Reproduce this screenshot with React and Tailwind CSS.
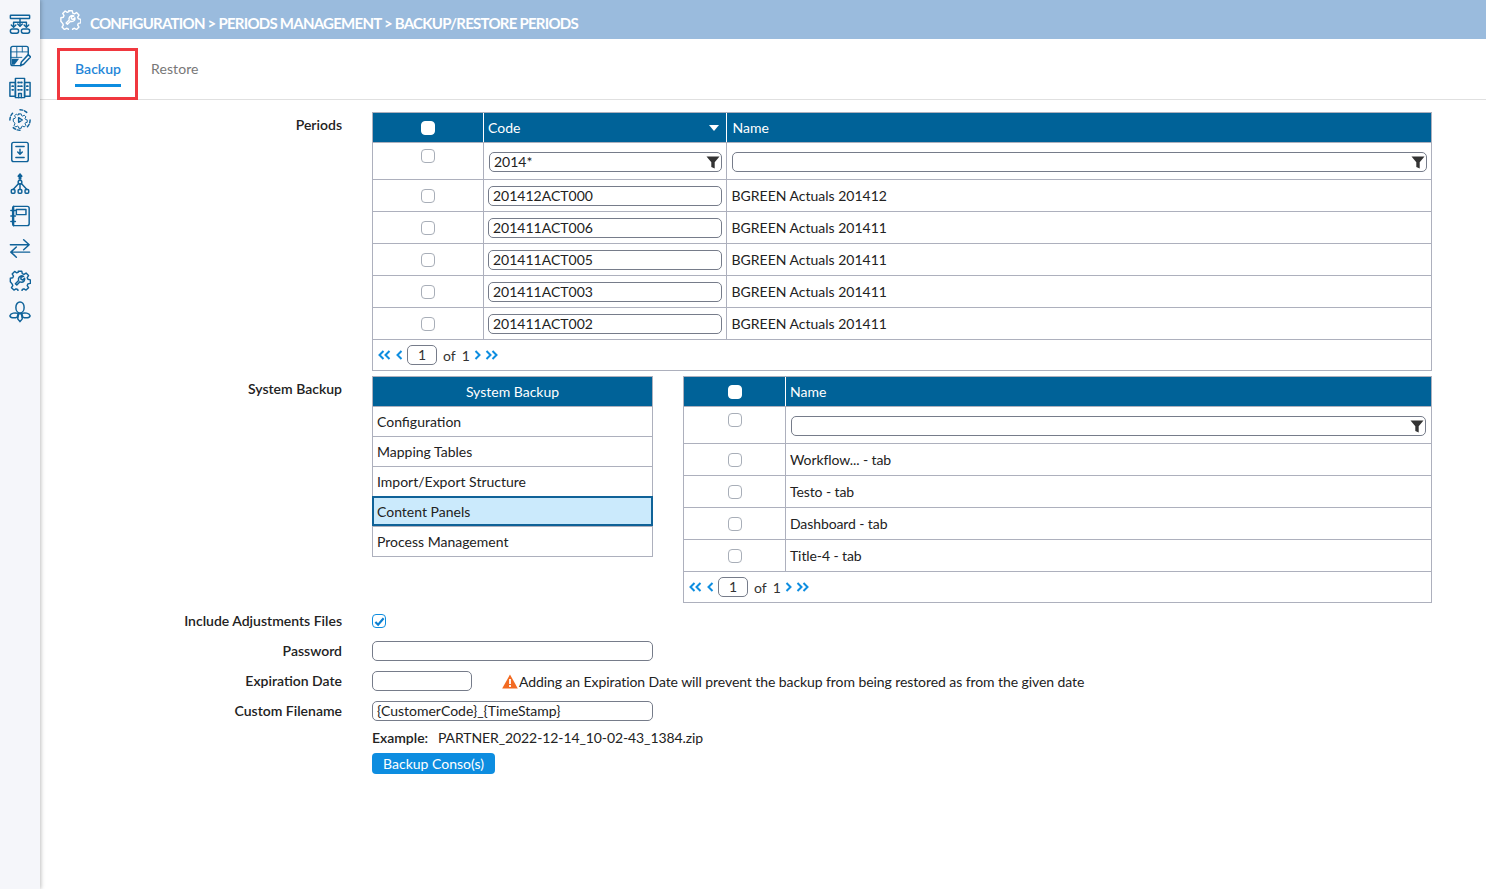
import React from "react";

const Ico = ({ children, className = "" }) => (
  <svg viewBox="0 0 24 24" fill="none" stroke="#0f6299" strokeWidth="1.6" strokeLinecap="round" strokeLinejoin="round" className={"w-[22px] h-[22px] " + className}>{children}</svg>
);
const gearPath = "M10 2h4l.6 2.8 1.9.8 2.4-1.5 2.8 2.8-1.5 2.4.8 1.9 2.8.6v4l-2.8.6-.8 1.9 1.5 2.4-2.8 2.8-2.4-1.5-1.9.8-.6 2.8h-4l-.6-2.8-1.9-.8-2.4 1.5-2.8-2.8 1.5-2.4-.8-1.9L1 14v-4l2.8-.6.8-1.9-1.5-2.4 2.8-2.8 2.4 1.5 1.9-.8z";

const sideIcons = [
  <Ico key="1"><rect x="1.500" y="2.500" width="21" height="3.500" rx=".5" /><path d="M12 6v8M5 10h14M5 10v5M19 10v5" /><path d="M2.500 13l2.500 2.500L7.500 13M16.500 13l2.500 2.500 2.500-2.500M9.500 12l2.500 2.500 2.500-2.500" /><rect x="1.500" y="17.500" width="9" height="4.500" rx="2" /><rect x="13.500" y="17.500" width="9" height="4.500" rx="2" /></Ico>,
  <Ico key="2"><path d="M13 22.500H4a2 2 0 0 1-2-2v-17a2 2 0 0 1 2-2h15a2 2 0 0 1 2 2v7" /><path d="M2 7.500h19M2 13.500h12M8.500 1.500v12M14.500 1.500v6" strokeWidth="1" /><path d="M12.500 22.500l1-4L21 10.500l2.500 2.500-7.500 8z" /><path d="M3 15l8 0-5 6.500-3 0z" fill="#0f6299" stroke="none" /></Ico>,
  <Ico key="3"><rect x="7" y="1.500" width="10" height="21" /><rect x="1" y="6" width="6" height="15" /><rect x="17" y="6" width="6" height="15" /><path d="M10 6h1M13 6h1M10 10h1M13 10h1M10 14h1M13 14h1M3.500 10h1M3.500 14h1M19.500 10h1M19.500 14h1" strokeWidth="2" /><path d="M10.500 22.500v-4.500h3v4.500" /></Ico>,
  <Ico key="4"><path d={gearPath} transform="translate(4 4) scale(.667)" /><path d="M10.500 9.500v5l4-2.500z" /><path d="M12 .8a11 11 0 0 1 8 3.500M23 12a11 11 0 0 1-3 7.500M12 23.200a11 11 0 0 1-8-3.500M1 12a11 11 0 0 1 3-7.500" strokeDasharray="3 2" /></Ico>,
  <Ico key="5"><rect x="3" y="1.500" width="18" height="21" rx="2" /><path d="M7.500 6h9M7.500 18h9M12 9v5M9.500 12l2.500 2.500 2.500-2.500" /></Ico>,
  <Ico key="6"><path d="M12 1l2 2.500h-1.200v3h-1.600v-3H10z" fill="#0f6299" /><circle cx="12" cy="10" r="2" /><path d="M12 12v6M10.500 11.500L4.500 18M13.500 11.500L19.500 18" /><rect x="2.500" y="18" width="4" height="4" rx="1" /><rect x="10" y="18" width="4" height="4" rx="1" /><rect x="17.500" y="18" width="4" height="4" rx="1" /></Ico>,
  <Ico key="7"><path d="M5 1.500h15a2 2 0 0 1 2 2v17a2 2 0 0 1-2 2H5z" /><path d="M2 6h5M2 12h5M2 18h5M5 1.500a2 2 0 0 0-1 2v17a2 2 0 0 0 1 2" /><rect x="8" y="5" width="10.500" height="5.500" /></Ico>,
  <Ico key="8"><path d="M1.500 8.500H22M16 3l6 5.500-6 5.500M22.500 16.500H2M8 11l-6 5.500 6 5.500" /></Ico>,
  <Ico key="9"><path d={gearPath} transform="scale(.96) translate(.500 .500)" /><path d="M16 8a4 4 0 0 0-5 1 4 4 0 0 0-.5 3.500L7 16l1.500 1.500 3.500-3.500a4 4 0 0 0 4.500-1 4 4 0 0 0 .5-3l-2 2-2-1v-2z" /></Ico>,
  <Ico key="10"><ellipse cx="12" cy="7" rx="4.500" ry="6" /><path d="M10 13.500c-3-1-8-.5-9 2.500 0 2.500 5 3 8 1.500l1-4zM14 13.500c3-1 8-.5 9 2.500 0 2.500-5 3-8 1.500l-1-4zM10.500 14h3l1 5.500-2.500 3-2.500-3z" /></Ico>,
];

const Check = ({ dark }) => (
  <span className={"block w-[14px] h-[14px] rounded-[4px] border " + (dark ? "bg-white border-white" : "bg-white border-[#a8aeb8]")} />
);

const Funnel = () => (
  <svg viewBox="0 0 14 14" className="w-[14px] h-[14px] absolute right-[1px] top-[2px]">
    <path d="M.5 1.500h13L8.700 7.200V13.500L5.300 12V7.200z" fill="#333" />
  </svg>
);

const Field = ({ children, className = "" }) => (
  <div className={"h-[20px] bg-white border border-[#767c8a] rounded-[5px] text-[14px] leading-[18px] text-[#222] px-1 relative " + className}>{children}</div>
);

const Chev = ({ d, w = 9 }) => (
  <svg viewBox={`0 0 ${w} 10`} width={w} height="10" fill="none" stroke="#0d8de0" strokeWidth="2"><path d={d} /></svg>
);
const SglL = () => <Chev w={7} d="M5.500 1L1.500 5l4 4" />;
const SglR = () => <Chev w={7} d="M1.500 1l4 4-4 4" />;
const DblL = () => <Chev w={13} d="M5.500 1L1.500 5l4 4M11.500 1l-4 4 4 4" />;
const DblR = () => <Chev w={13} d="M1.500 1l4 4-4 4M7.500 1l4 4-4 4" />;

const Pager = () => (
  <div className="h-[30px] flex items-center pl-[5px] text-[14px] text-[#333]">
    <span className="w-[17px] flex"><DblL /></span>
    <span className="w-[11px] flex ml-[1px]"><SglL /></span>
    <div className="w-[30px] h-[20px] border border-[#767c8a] rounded-[5px] text-center leading-[18px]">1</div>
    <span className="ml-[6px]">of</span>
    <span className="ml-[6px]">1</span>
    <span className="w-[9px] ml-[4px] flex"><SglR /></span>
    <span className="w-[14px] ml-[2px] flex"><DblR /></span>
  </div>
);

const Hdr = ({ className = "", children }) => (
  <div className={"flex items-center h-[29px] bg-[#006298] text-white text-[14px] border-l border-white first:border-l-0 " + className}>{children}</div>
);

const periods = ["201412ACT000", "201411ACT006", "201411ACT005", "201411ACT003", "201411ACT002"];
const names = ["BGREEN Actuals 201412", "BGREEN Actuals 201411", "BGREEN Actuals 201411", "BGREEN Actuals 201411", "BGREEN Actuals 201411"];
const systems = ["Configuration", "Mapping Tables", "Import/Export Structure", "Content Panels", "Process Management"];
const tabs = ["Workflow... - tab", "Testo - tab", "Dashboard - tab", "Title-4 - tab"];

const Label = ({ children, className = "" }) => (
  <div className={"w-[302px] shrink-0 text-right text-[14px] font-semibold text-[#222] " + className}>{children}</div>
);

export default function App() {
  return (
    <div className="flex min-h-[889px] bg-white text-[#333]" style={{ fontFamily: "Lato, 'Liberation Sans', sans-serif" }}>
      <aside className="w-[40px] shrink-0 bg-[#f5f6fa] shadow-[1px_0_4px_rgba(0,0,0,0.25)] flex flex-col items-center pt-[13px] gap-[10px] z-10">
        {sideIcons}
      </aside>
      <main className="flex-1 min-w-0">
        <header className="h-[39px] bg-[#9abbdd] flex items-center pl-[20px] text-white">
          <svg viewBox="0 0 24 24" fill="none" stroke="#fff" strokeWidth="1.600" strokeLinejoin="round" className="w-[21px] h-[21px]">
            <path d={gearPath} />
            <path d="M16 8a4 4 0 0 0-5 1 4 4 0 0 0-.5 3.500L7 16l1.500 1.500 3.500-3.500a4 4 0 0 0 4.500-1 4 4 0 0 0 .5-3l-2 2-2-1v-2z" />
          </svg>
          <span className="ml-[9px] mt-[8px] text-[15px] font-bold tracking-[-0.75px]">CONFIGURATION &gt; PERIODS MANAGEMENT &gt; BACKUP/RESTORE PERIODS</span>
        </header>

        <nav className="h-[61px] border-b border-[#e0e0e0] flex relative">
          <div className="absolute left-[17px] top-[9px] w-[81px] h-[52px] border-[3px] border-[#f0383f] pointer-events-none" />
          <div className="ml-[35px] mt-[20px] h-[28px] w-[46px] border-b-[3px] border-[#0d8de0] text-[14px] font-semibold text-[#1f86d8] text-center leading-[20px]">Backup</div>
          <div className="ml-[30px] mt-[20px] text-[14px] text-[#777] leading-[20px] tracking-[0.1px]">Restore</div>
        </nav>

        <div className="pt-[12px]">
          <section className="flex">
            <Label className="pt-[2px]">Periods</Label>
            <div className="ml-[30px] w-[1060px] border border-[#adb0bd]">
              <div className="flex">
                <Hdr className="w-[110px] justify-center"><Check dark /></Hdr>
                <Hdr className="w-[243px] pl-[4px] justify-between pr-[7px]">Code
                  <svg width="10" height="6" viewBox="0 0 10 6"><path d="M0 0h10L5 6z" fill="#fff" /></svg>
                </Hdr>
                <Hdr className="flex-1 pl-[5.500px]">Name</Hdr>
              </div>
              <div className="flex h-[37px] border-t border-[#adb0bd]">
                <div className="w-[110px] flex justify-center pt-[6px]"><Check /></div>
                <div className="w-[243px] border-l border-[#adb0bd] pl-[5px] pr-[4px] pt-[9px]"><Field>2014*<Funnel /></Field></div>
                <div className="flex-1 border-l border-[#adb0bd] pl-[5px] pr-[4px] pt-[9px]"><Field><Funnel /></Field></div>
              </div>
              {periods.map((p, i) => (
                <div key={p} className="flex h-[32px] border-t border-[#adb0bd]">
                  <div className="w-[110px] flex justify-center items-center"><Check /></div>
                  <div className="w-[243px] border-l border-[#adb0bd] pl-[4px] pr-[4px] flex items-center"><Field className="w-full">{p}</Field></div>
                  <div className="flex-1 border-l border-[#adb0bd] pl-[4.500px] flex items-center text-[14px] text-[#222]">{names[i]}</div>
                </div>
              ))}
              <div className="border-t border-[#adb0bd]"><Pager /></div>
            </div>
          </section>

          <section className="flex mt-[5px]">
            <Label className="pt-[2px]">System Backup</Label>
            <div className="ml-[30px] w-[281px] h-[181px] border border-[#adb0bd] self-start">
              <Hdr className="justify-center">System Backup</Hdr>
              {systems.map((s) => (
                <div key={s} className={"h-[30px] flex items-center text-[14px] text-[#222] " + (s === "Content Panels" ? "bg-[#cbeafc] border-2 border-[#0f6298] -mx-px pl-[3px]" : "border-t border-[#adb0bd] pl-[4px]")}>{s}</div>
              ))}
            </div>
            <div className="ml-[30px] w-[749px] border border-[#adb0bd]">
              <div className="flex">
                <Hdr className="w-[101px] justify-center"><Check dark /></Hdr>
                <Hdr className="flex-1 pl-[4px]">Name</Hdr>
              </div>
              <div className="flex h-[37px] border-t border-[#adb0bd]">
                <div className="w-[101px] flex justify-center pt-[6px]"><Check /></div>
                <div className="flex-1 border-l border-[#adb0bd] pl-[5px] pr-[5px] pt-[9px]"><Field><Funnel /></Field></div>
              </div>
              {tabs.map((t) => (
                <div key={t} className="flex h-[32px] border-t border-[#adb0bd]">
                  <div className="w-[101px] flex justify-center items-center"><Check /></div>
                  <div className="flex-1 border-l border-[#adb0bd] pl-[4px] flex items-center text-[14px] text-[#222] tracking-[-0.1px]">{t}</div>
                </div>
              ))}
              <div className="border-t border-[#adb0bd]"><Pager /></div>
            </div>
          </section>

          <section className="flex items-center h-[30px] mt-[3px]">
            <Label className="pb-[2px]">Include Adjustments Files</Label>
            <div className="ml-[30px] w-[14px] h-[14px] rounded-[4px] border-[1.5px] border-[#0d8de0] flex items-center justify-center bg-white">
              <svg viewBox="0 0 12 12" className="w-[11px] h-[11px]"><path d="M1.500 6.500L4.500 9.500L10.500 2.500" fill="none" stroke="#0d7fd0" strokeWidth="2.400" /></svg>
            </div>
          </section>
          <section className="flex items-center h-[30px]">
            <Label className="pb-[2px]">Password</Label>
            <Field className="ml-[30px] w-[281px]" />
          </section>
          <section className="flex items-center h-[30px]">
            <Label className="pb-[2px]">Expiration Date</Label>
            <Field className="ml-[30px] w-[100px]" />
            <svg viewBox="0 0 16 15" className="w-[16px] h-[15px] ml-[30px]">
              <path d="M8 .5L15.800 14.500H.2z" fill="#f26a21" />
              <path d="M7.100 5h1.800v5H7.100zM7.100 11h1.800v2H7.100z" fill="#fff" />
            </svg>
            <span className="ml-[1px] text-[14px] text-[#222] tracking-[-0.08px]">Adding an Expiration Date will prevent the backup from being restored as from the given date</span>
          </section>
          <section className="flex items-center h-[30px]">
            <Label className="pb-[2px]">Custom Filename</Label>
            <Field className="ml-[30px] w-[281px]">{"{CustomerCode}_{TimeStamp}"}</Field>
          </section>
          <section className="flex items-center h-[22px] ml-[332px] text-[14px] text-[#222]">
            <span className="font-semibold w-[66px]">Example:</span>
            <span className="tracking-[-0.1px]">PARTNER_2022-12-14_10-02-43_1384.zip</span>
          </section>
          <div className="ml-[332px] mt-[5px] w-[123px] h-[21px] rounded-[4px] bg-[#0d8de0] text-white text-[14px] text-center leading-[21px]">Backup Conso(s)</div>
        </div>
      </main>
    </div>
  );
}
